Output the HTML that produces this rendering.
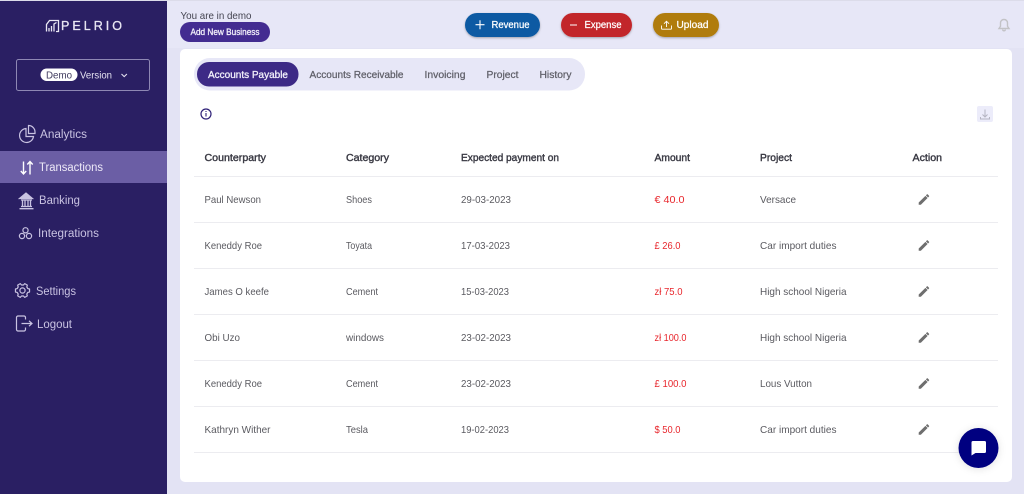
<!DOCTYPE html>
<html><head><meta charset="utf-8"><style>
html,body{margin:0;padding:0;width:1024px;height:494px;overflow:hidden;background:#e7e7f7}
svg{display:block;filter:blur(.3px)}
text{font-family:"Liberation Sans",sans-serif;font-size:10.500px}
.h{fill:#3a3a44;stroke:#3a3a44;stroke-width:.4px;font-size:10.500px}
.c{fill:#5a5a60}
.r{fill:#e8262c}
.n{fill:#c9c3e2;font-size:11.500px}
.w{fill:#fff;stroke:#fff;stroke-width:.25px;font-size:10px}
.t{fill:#5f5f68;stroke:#5f5f68;stroke-width:.25px;font-size:10.500px}
</style></head><body>
<svg width="1024" height="494" viewBox="0 0 1024 494" xmlns="http://www.w3.org/2000/svg">
<defs><filter id="s" x="-20%" y="-30%" width="140%" height="170%"><feDropShadow dx="0" dy="1" stdDeviation="1" flood-color="#000" flood-opacity=".3"/></filter>
<filter id="f" x="-30%" y="-30%" width="160%" height="160%"><feDropShadow dx="0" dy="1" stdDeviation="4" flood-color="#000" flood-opacity=".12"/></filter>
<path id="pen" d="M-5 3.200V5H-3.200L2.400-.6.600-2.400ZM3.600-1.800a.5.5 0 0 0 0-.7L2.500-3.600a.5.5 0 0 0-.7 0L1-2.800 2.800-1Z" fill="#6e6e6e" transform="translate(.7 -.8) scale(1.200)"/></defs>
<rect width="1024" height="494" fill="#e7e7f7"/>
<rect width="1024" height="1" fill="#dcdcea"/>
<rect x="167" y="48" width="857" height="446" fill="#e3e3f4"/>
<!-- sidebar -->
<rect width="167" height="494" fill="#2a1f63"/>
<rect y="0" width="167" height="1" fill="#dcdcea"/>
<rect y="151" width="167" height="32" fill="#6b5ea5"/>
<!-- logo -->
<g fill="none" stroke="#e9e7f3" stroke-width="1.300"><path d="M46.500 31.500V24.500L49.500 20.500H58.500V31.500H56"/><path d="M49 31.500V28M51.500 31.500V26M54 31.500V24L56.500 22.500"/></g>
<text x="61" y="30" textLength="61" lengthAdjust="spacing" style="font-size:12.500px" fill="#e9e7f3" stroke="#e9e7f3" stroke-width=".3">PELRIO</text>
<!-- version -->
<rect x="16.500" y="59.500" width="133" height="31" rx="2" fill="none" stroke="#8e88b4"/>
<rect x="40.500" y="68.500" width="37" height="12.500" rx="6.200" fill="#fff"/>
<text x="46" y="78.300" textLength="26" lengthAdjust="spacingAndGlyphs" fill="#3f3a5e">Demo</text>
<text x="80" y="78.300" textLength="32" lengthAdjust="spacingAndGlyphs" fill="#e4e2f0">Version</text>
<path d="M121.500 74l2.700 2.600 2.700-2.600" fill="none" stroke="#e4e2f0" stroke-width="1.100"/>
<!-- nav -->
<text class="n" x="40" y="138" textLength="47" lengthAdjust="spacingAndGlyphs">Analytics</text>
<text class="n" x="39" y="171" textLength="64" lengthAdjust="spacingAndGlyphs" style="fill:#eeeaf8">Transactions</text>
<text class="n" x="39" y="204" textLength="41" lengthAdjust="spacingAndGlyphs">Banking</text>
<text class="n" x="38" y="237" textLength="61" lengthAdjust="spacingAndGlyphs">Integrations</text>
<text class="n" x="36" y="295" textLength="40" lengthAdjust="spacingAndGlyphs">Settings</text>
<text class="n" x="37" y="328" textLength="35" lengthAdjust="spacingAndGlyphs">Logout</text>
<g fill="none" stroke="#c9c3e2" stroke-width="1.200">
<path d="M26 128.500a7 7 0 1 0 7.500 8H26Z"/><path d="M28.500 125.500a6.500 6.500 0 0 1 6.500 6.500v1.500h-6.500Z"/>
<path d="M23.500 161.500V174M20.800 171l2.700 3 2.700-3" stroke="#fff" stroke-width="1.400"/><path d="M30 174.500V161.500M27.300 164.500l2.700-3 2.700 3" stroke="#fff" stroke-width="1.400"/>
<path d="M19.500 198.500L26 193 32.500 198.500Z" fill="#c9c3e2"/><path d="M21 200h11M21 206.500h11M22.500 200v6.500M25 200v6.500M28 200v6.500M30.500 200v6.500M19.500 208.700h14" stroke-width="1.300"/>
<circle cx="25.500" cy="230.300" r="2.600"/><circle cx="22" cy="236" r="2.600"/><circle cx="29" cy="236" r="2.600"/>
<path transform="translate(22.500 290.500)" stroke-linejoin="round" d="M5.260-1.920L7.040-1.500 7.040 1.500 5.260 1.920 4.290 3.600 4.820 5.350 2.220 6.850.97 5.510-.97 5.510-2.220 6.850-4.820 5.350-4.290 3.600-5.260 1.920-7.040 1.500-7.040-1.500-5.260-1.920-4.290-3.600-4.820-5.350-2.220-6.850-.97-5.510.97-5.510 2.220-6.850 4.820-5.350 4.290-3.600Z"/><circle cx="22.500" cy="290.500" r="2.600"/>
<path d="M25.500 319.500V317.500a1.500 1.500 0 0 0-1.500-1.500h-6a1.500 1.500 0 0 0-1.500 1.500v12a1.500 1.500 0 0 0 1.500 1.500h6a1.500 1.500 0 0 0 1.500-1.500v-2M21.500 323.500h10M29 320.800l3 2.700-3 2.700"/>
</g>
<!-- header -->
<text x="180.500" y="19" textLength="71" lengthAdjust="spacingAndGlyphs" fill="#444450">You are in demo</text>
<rect x="180" y="22" width="90" height="20" rx="10" fill="#432c91"/>
<text x="190.500" y="35" textLength="69" lengthAdjust="spacingAndGlyphs" style="font-size:9px" fill="#f2f0fa" stroke="#f2f0fa" stroke-width=".3">Add New Business</text>
<rect x="465" y="13" width="75" height="24" rx="12" fill="#0c5aa3" filter="url(#s)"/>
<path d="M475.500 24.700h9M480 20.200v9" stroke="#fff" stroke-width="1.100"/>
<text class="w" x="491.500" y="28" textLength="38" lengthAdjust="spacingAndGlyphs">Revenue</text>
<rect x="561" y="13" width="71" height="24" rx="12" fill="#c2272b" filter="url(#s)"/>
<path d="M570 25h7" stroke="#fff" stroke-width="1"/>
<text class="w" x="584.500" y="28" textLength="37" lengthAdjust="spacingAndGlyphs">Expense</text>
<rect x="653" y="13" width="66" height="24" rx="12" fill="#b07c0c" filter="url(#s)"/>
<path d="M661.500 25.500v2.700a1 1 0 0 0 1 1h8a1 1 0 0 0 1-1v-2.700M666.500 27V21.500M664 23.700l2.500-2.500 2.500 2.500" fill="none" stroke="#fff" stroke-width=".9"/>
<text class="w" x="676.500" y="28" textLength="32" lengthAdjust="spacingAndGlyphs">Upload</text>
<path d="M1004 20.500a3.300 3.300 0 0 0-3.500 3.500v3.200l-1.500 2.300h10l-1.500-2.300V24a3.300 3.300 0 0 0-3.500-3.500ZM1002.700 30.500a1.300 1.300 0 0 0 2.600 0" transform="translate(0 -1)" fill="none" stroke="#c2c2c6" stroke-width="1.400"/>
<!-- card -->
<rect x="180" y="49" width="832" height="433" rx="5" fill="#fff"/>
<rect x="194" y="58" width="391" height="32.500" rx="16" fill="#e7e7f7"/>
<rect x="197" y="62" width="101.500" height="24.500" rx="12" fill="#3d2a86"/>
<text x="208" y="78" textLength="80" lengthAdjust="spacingAndGlyphs" fill="#f3f1fb" stroke="#f3f1fb" stroke-width=".3">Accounts Payable</text>
<text class="t" x="309.500" y="78" textLength="94" lengthAdjust="spacingAndGlyphs">Accounts Receivable</text>
<text class="t" x="424.500" y="78" textLength="41" lengthAdjust="spacingAndGlyphs">Invoicing</text>
<text class="t" x="486.500" y="78" textLength="32" lengthAdjust="spacingAndGlyphs">Project</text>
<text class="t" x="539.500" y="78" textLength="32" lengthAdjust="spacingAndGlyphs">History</text>
<circle cx="206" cy="114" r="5" fill="none" stroke="#2f2178" stroke-width="1.200"/>
<path d="M206 113v3.500M206 111v1" stroke="#2f2178" stroke-width="1.100"/>
<rect x="977" y="106" width="16" height="16" rx="2" fill="#ececfa"/>
<path d="M985 109.500v7M982.500 114.500l2.500 2.500 2.500-2.500M980.500 117v2h9v-2" fill="none" stroke="#b5b5c2" stroke-width="1"/>
<!-- table head -->
<text class="h" x="204.500" y="161" textLength="61.500" lengthAdjust="spacingAndGlyphs">Counterparty</text>
<text class="h" x="346" y="161" textLength="43" lengthAdjust="spacingAndGlyphs">Category</text>
<text class="h" x="461" y="161" textLength="98" lengthAdjust="spacingAndGlyphs">Expected payment on</text>
<text class="h" x="654.500" y="161" textLength="35.500" lengthAdjust="spacingAndGlyphs">Amount</text>
<text class="h" x="760" y="161" textLength="32" lengthAdjust="spacingAndGlyphs">Project</text>
<text class="h" x="912.500" y="161" textLength="29.500" lengthAdjust="spacingAndGlyphs">Action</text>
<g fill="#ececf0"><rect x="194" y="176" width="804" height="1"/><rect x="194" y="222" width="804" height="1"/><rect x="194" y="268" width="804" height="1"/><rect x="194" y="314" width="804" height="1"/><rect x="194" y="360" width="804" height="1"/><rect x="194" y="406" width="804" height="1"/><rect x="194" y="452" width="804" height="1"/></g>
<!-- rows -->
<text class="c" x="204.500" y="203" textLength="56.500" lengthAdjust="spacingAndGlyphs">Paul Newson</text>
<text class="c" x="346" y="203" textLength="26" lengthAdjust="spacingAndGlyphs">Shoes</text>
<text class="c" x="461" y="203" textLength="50" lengthAdjust="spacingAndGlyphs">29-03-2023</text>
<text class="r" x="654.500" y="203" textLength="30" lengthAdjust="spacingAndGlyphs">€ 40.0</text>
<text class="c" x="760" y="203" textLength="36" lengthAdjust="spacingAndGlyphs">Versace</text>
<use href="#pen" x="924" y="199.500"/>
<text class="c" x="204.500" y="249" textLength="57.500" lengthAdjust="spacingAndGlyphs">Keneddy Roe</text>
<text class="c" x="346" y="249" textLength="26" lengthAdjust="spacingAndGlyphs">Toyata</text>
<text class="c" x="461" y="249" textLength="49" lengthAdjust="spacingAndGlyphs">17-03-2023</text>
<text class="r" x="654.500" y="249" textLength="26" lengthAdjust="spacingAndGlyphs">£ 26.0</text>
<text class="c" x="760" y="249" textLength="76.500" lengthAdjust="spacingAndGlyphs">Car import duties</text>
<use href="#pen" x="924" y="245.500"/>
<text class="c" x="204.500" y="295" textLength="64.500" lengthAdjust="spacingAndGlyphs">James O keefe</text>
<text class="c" x="346" y="295" textLength="32" lengthAdjust="spacingAndGlyphs">Cement</text>
<text class="c" x="461" y="295" textLength="48" lengthAdjust="spacingAndGlyphs">15-03-2023</text>
<text class="r" x="654.500" y="295" textLength="28" lengthAdjust="spacingAndGlyphs">zł 75.0</text>
<text class="c" x="760" y="295" textLength="86.500" lengthAdjust="spacingAndGlyphs">High school Nigeria</text>
<use href="#pen" x="924" y="291.500"/>
<text class="c" x="204.500" y="341" textLength="35.500" lengthAdjust="spacingAndGlyphs">Obi Uzo</text>
<text class="c" x="346" y="341" textLength="38" lengthAdjust="spacingAndGlyphs">windows</text>
<text class="c" x="461" y="341" textLength="50" lengthAdjust="spacingAndGlyphs">23-02-2023</text>
<text class="r" x="654.500" y="341" textLength="32" lengthAdjust="spacingAndGlyphs">zł 100.0</text>
<text class="c" x="760" y="341" textLength="86.500" lengthAdjust="spacingAndGlyphs">High school Nigeria</text>
<use href="#pen" x="924" y="337.500"/>
<text class="c" x="204.500" y="387" textLength="57.500" lengthAdjust="spacingAndGlyphs">Keneddy Roe</text>
<text class="c" x="346" y="387" textLength="32" lengthAdjust="spacingAndGlyphs">Cement</text>
<text class="c" x="461" y="387" textLength="50" lengthAdjust="spacingAndGlyphs">23-02-2023</text>
<text class="r" x="654.500" y="387" textLength="32" lengthAdjust="spacingAndGlyphs">£ 100.0</text>
<text class="c" x="760" y="387" textLength="52" lengthAdjust="spacingAndGlyphs">Lous Vutton</text>
<use href="#pen" x="924" y="383.500"/>
<text class="c" x="204.500" y="433" textLength="66" lengthAdjust="spacingAndGlyphs">Kathryn Wither</text>
<text class="c" x="346" y="433" textLength="22" lengthAdjust="spacingAndGlyphs">Tesla</text>
<text class="c" x="461" y="433" textLength="48" lengthAdjust="spacingAndGlyphs">19-02-2023</text>
<text class="r" x="654.500" y="433" textLength="26" lengthAdjust="spacingAndGlyphs">$ 50.0</text>
<text class="c" x="760" y="433" textLength="76.500" lengthAdjust="spacingAndGlyphs">Car import duties</text>
<use href="#pen" x="924" y="429.500"/>
<!-- chat -->
<circle cx="978.500" cy="448" r="20" fill="#020280" filter="url(#f)"/>
<path d="M973 441h11.500a1.500 1.500 0 0 1 1.500 1.500v9a1.500 1.500 0 0 1-1.500 1.500h-9L971.500 455.500v-13a1.500 1.500 0 0 1 1.500-1.500Z" fill="#fff"/>
</svg>
</body></html>
